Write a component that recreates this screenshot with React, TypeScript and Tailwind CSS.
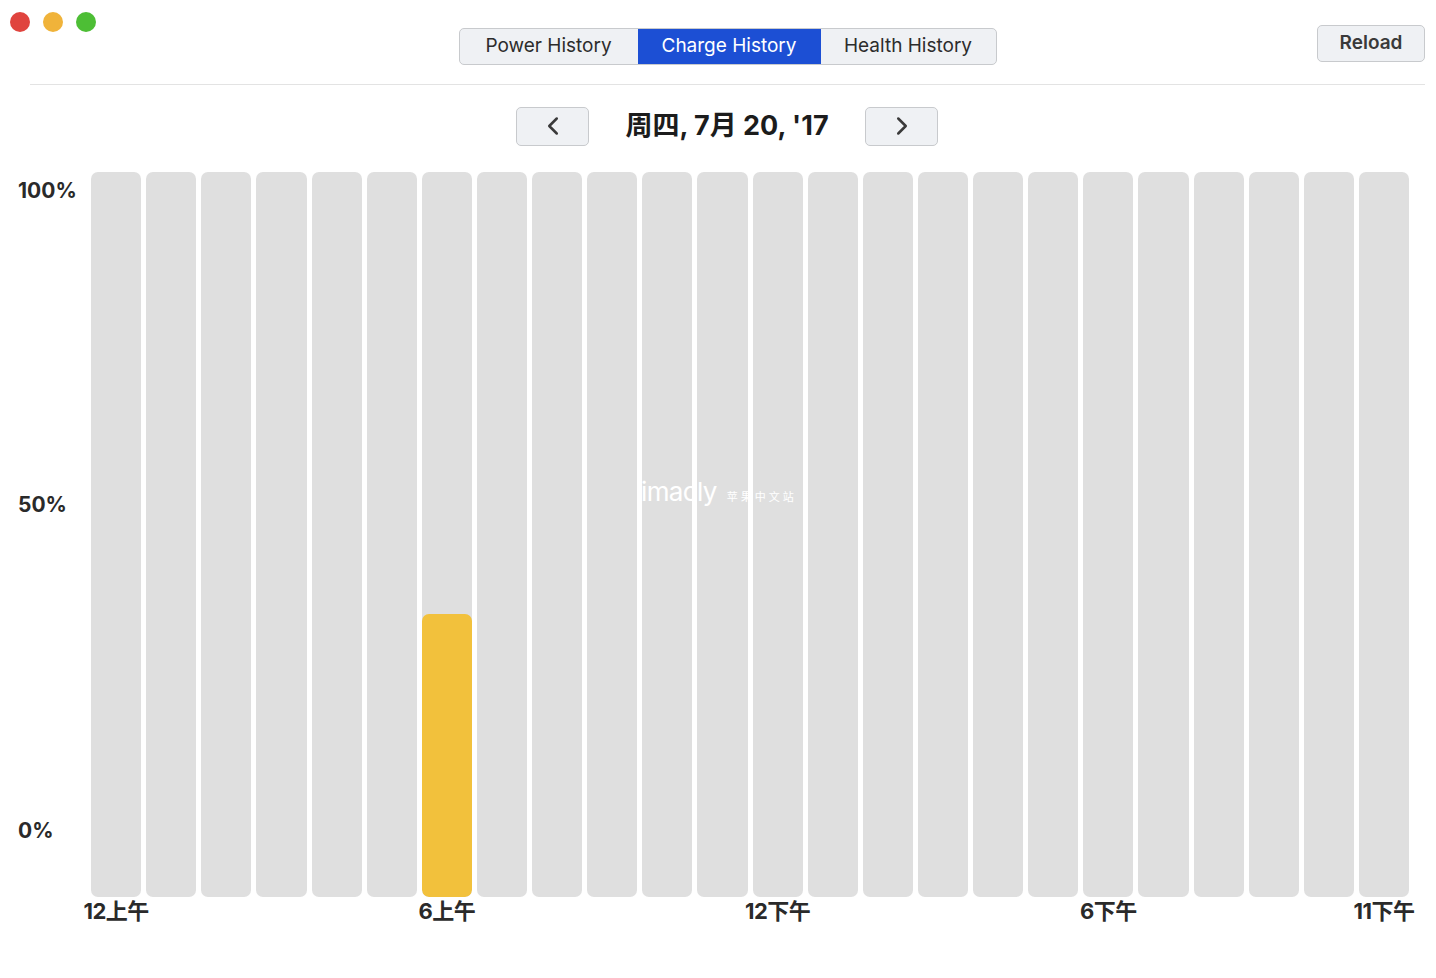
import { ChevronLeft, ChevronRight } from 'lucide-react'

const font = { fontFamily: 'Inter, "Noto Sans CJK SC", sans-serif' }

const hours = Array.from({ length: 24 }, (_, i) => i)
const charge: Record<number, number> = { 6: 39 }
const xLabels: Record<number, string> = { 0: '12上午', 6: '6上午', 12: '12下午', 18: '6下午', 23: '11下午' }

export default function App() {
  return (
    <div className="w-[1436px] h-[978px] bg-white text-[#222] overflow-hidden" style={font}>
      {/* toolbar */}
      <div className="relative h-[85px] ml-[30px] mr-[11px] border-b border-[#e3e3e3]">
        <div className="absolute left-[-20px] top-[12px] flex gap-[13px]">
          <span className="w-[20px] h-[20px] rounded-full bg-[#e0443e]" />
          <span className="w-[20px] h-[20px] rounded-full bg-[#f0b33a]" />
          <span className="w-[20px] h-[20px] rounded-full bg-[#4dbe35]" />
        </div>
        <div className="flex justify-center pt-[28px]">
          <div className="flex h-[37px] rounded-[5px] border border-[#c8cacd] bg-[#eff1f4] overflow-hidden text-[19px]">
            <button className="w-[178px] text-[#2c2c2c]">Power History</button>
            <button className="w-[183px] bg-[#1c4fd4] text-white">Charge History</button>
            <button className="w-[175px] text-[#2c2c2c]">Health History</button>
          </div>
        </div>
        <button className="absolute right-0 top-[25px] w-[108px] h-[37px] rounded-[5px] border border-[#c8cacd] bg-[#eff1f4] text-[19px] font-semibold text-[#3a3a3a]">
          Reload
        </button>
      </div>

      {/* date nav */}
      <div className="flex items-center justify-center gap-[30px] mt-[21px] ml-[18px]">
        <button className="w-[73px] h-[39px] rounded-[5px] border border-[#c8cacd] bg-[#eff1f4] flex items-center justify-center">
          <ChevronLeft size={30} strokeWidth={2} className="text-[#3a3a3a]" />
        </button>
        <div className="w-[216px] text-center text-[27px] font-bold text-[#1c1c1c]">周四, 7月 20, '17</div>
        <button className="w-[73px] h-[39px] rounded-[5px] border border-[#c8cacd] bg-[#eff1f4] flex items-center justify-center">
          <ChevronRight size={30} strokeWidth={2} className="text-[#3a3a3a]" />
        </button>
      </div>

      {/* chart */}
      <div className="flex mt-[25px]">
        <div className="relative w-[91px] h-[725px] text-[21px] font-bold text-[#2a2a2a]">
          <span className="absolute left-[18px] top-[3px]">100%</span>
          <span className="absolute left-[18px] top-[317px]">50%</span>
          <span className="absolute left-[18px] top-[643px]">0%</span>
        </div>
        <div className="relative w-[1318px]">
          <div className="flex gap-[5px] h-[725px]">
            {hours.map((h) => (
              <div key={h} className="flex-1 rounded-[7px] bg-[#dfdfdf] flex flex-col justify-end overflow-hidden">
                {charge[h] ? (
                  <div className="rounded-[7px] bg-[#f2c13c]" style={{ height: `${charge[h]}%` }} />
                ) : null}
              </div>
            ))}
          </div>
          <div className="absolute left-[550px] top-[300px] flex items-baseline gap-[10px] text-white pointer-events-none">
            <span className="text-[26px] tracking-tight">imacly</span>
            <span className="text-[11px] tracking-[3px]">苹果中文站</span>
          </div>
          <div className="flex gap-[5px]">
            {hours.map((h) => (
              <div key={h} className="flex-1 min-w-0 flex justify-center">
                <span className="whitespace-nowrap text-[22px] font-bold text-[#2a2a2a] leading-[28px] tracking-[-0.5px]">
                  {xLabels[h] ?? ''}
                </span>
              </div>
            ))}
          </div>
        </div>
      </div>
    </div>
  )
}
